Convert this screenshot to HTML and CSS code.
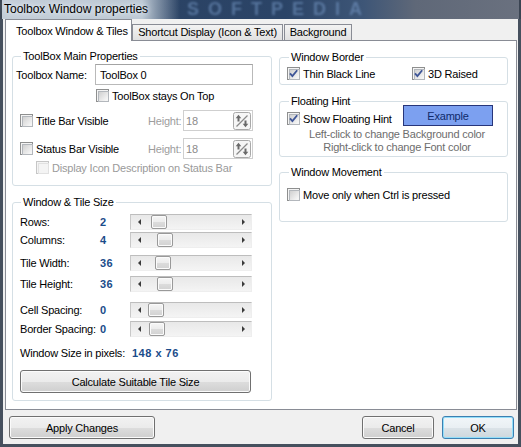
FILE: index.html
```html
<!DOCTYPE html>
<html>
<head>
<meta charset="utf-8">
<title>Toolbox Window properties</title>
<link rel="stylesheet" href="styles.css">
</head>
<body>
<div class="window">
  <div class="titlebar">
    <span class="title">Toolbox Window properties</span>
    <span class="watermark">SOFTPEDIA</span>
  </div>
  <div class="client">
    <div class="tabs">
      <div class="tab active">Toolbox Window &amp; Tiles</div>
      <div class="tab t-shortcut">Shortcut Display (Icon &amp; Text)</div>
      <div class="tab t-bg">Background</div>
    </div>
    <div class="panel">
      <div class="col col-left">
        <fieldset class="group">
          <legend>ToolBox Main Properties</legend>
          <div class="gbody gb-main">
            <div class="row row-name">
              <span class="lbl-name">Toolbox Name:</span>
              <span class="input input-name">ToolBox 0</span>
            </div>
            <div class="row row-ontop">
              <span class="check"><span class="cb"></span><span>ToolBox stays On Top</span></span>
            </div>
            <div class="row row-bar">
              <span class="check check-bar"><span class="cb"></span><span>Title Bar Visible</span></span>
              <span class="hlabel">Height:</span>
              <span class="input input-h"><span>18</span>
                <svg class="spin" width="18" height="18" viewBox="0 0 18 18"><rect x="0.5" y="0.5" width="17" height="17" rx="2" fill="#f6f6f6" stroke="#a9a9a9"/><path d="M3.5 14.5L14.5 3.5" stroke="#8a8a8a" stroke-width="1.2"/><path d="M5.5 2.8L8.3 6.2H6.5V9.5H4.5V6.2H2.7Z" fill="#6a6a6a"/><path d="M12.5 15.2L9.7 11.8H11.5V8.5H13.5V11.8H15.3Z" fill="#6a6a6a"/></svg>
              </span>
            </div>
            <div class="row row-bar row-status">
              <span class="check check-bar"><span class="cb"></span><span>Status Bar Visible</span></span>
              <span class="hlabel">Height:</span>
              <span class="input input-h"><span>18</span>
                <svg class="spin" width="18" height="18" viewBox="0 0 18 18"><rect x="0.5" y="0.5" width="17" height="17" rx="2" fill="#f6f6f6" stroke="#a9a9a9"/><path d="M3.5 14.5L14.5 3.5" stroke="#8a8a8a" stroke-width="1.2"/><path d="M5.5 2.8L8.3 6.2H6.5V9.5H4.5V6.2H2.7Z" fill="#6a6a6a"/><path d="M12.5 15.2L9.7 11.8H11.5V8.5H13.5V11.8H15.3Z" fill="#6a6a6a"/></svg>
              </span>
            </div>
            <div class="row row-desc">
              <span class="check disabled"><span class="cb"></span><span>Display Icon Description on Status Bar</span></span>
            </div>
          </div>
        </fieldset>

        <fieldset class="group g-size">
          <legend>Window &amp; Tile Size</legend>
          <div class="gbody gb-size">
            <div class="srow">
              <span>Rows:</span><span class="val">2</span>
              <div class="hscroll"><span class="sarr sarr-l"></span><span class="strack"><span class="thumb" style="margin-left:4px"></span></span><span class="sarr sarr-r"></span></div>
            </div>
            <div class="srow m2">
              <span>Columns:</span><span class="val">4</span>
              <div class="hscroll"><span class="sarr sarr-l"></span><span class="strack"><span class="thumb" style="margin-left:10px"></span></span><span class="sarr sarr-r"></span></div>
            </div>
            <div class="srow m7">
              <span>Tile Width:</span><span class="val">36</span>
              <div class="hscroll"><span class="sarr sarr-l"></span><span class="strack"><span class="thumb" style="margin-left:8px"></span></span><span class="sarr sarr-r"></span></div>
            </div>
            <div class="srow m5">
              <span>Tile Height:</span><span class="val">36</span>
              <div class="hscroll"><span class="sarr sarr-l"></span><span class="strack"><span class="thumb" style="margin-left:10px"></span></span><span class="sarr sarr-r"></span></div>
            </div>
            <div class="srow m10">
              <span>Cell Spacing:</span><span class="val">0</span>
              <div class="hscroll"><span class="sarr sarr-l"></span><span class="strack"><span class="thumb" style="margin-left:1px"></span></span><span class="sarr sarr-r"></span></div>
            </div>
            <div class="srow m3">
              <span>Border Spacing:</span><span class="val">0</span>
              <div class="hscroll"><span class="sarr sarr-l"></span><span class="strack"><span class="thumb" style="margin-left:2px"></span></span><span class="sarr sarr-r"></span></div>
            </div>
            <div class="wsrow">
              <span class="ws-label">Window Size in pixels:</span><span class="val">148 x 76</span>
            </div>
            <div class="btn btn-calc">Calculate Suitable Tile Size</div>
          </div>
        </fieldset>
      </div>

      <div class="col col-right">
        <fieldset class="group g-r">
          <legend>Window Border</legend>
          <div class="gbody gb-wb">
            <div class="wbrow">
              <span class="check"><span class="cb"><svg class="tick" width="11" height="11" viewBox="0 0 11 11"><path d="M2 5.3L4.4 8L9.2 2.2" fill="none" stroke="#3e5597" stroke-width="1.8"/></svg></span><span>Thin Black Line</span></span>
              <span class="check"><span class="cb"><svg class="tick" width="11" height="11" viewBox="0 0 11 11"><path d="M2 5.3L4.4 8L9.2 2.2" fill="none" stroke="#3e5597" stroke-width="1.8"/></svg></span><span>3D Raised</span></span>
            </div>
          </div>
        </fieldset>

        <fieldset class="group g-r g-hint">
          <legend>Floating Hint</legend>
          <div class="gbody gb-hint">
            <div class="hintrow">
              <span class="check check-hint"><span class="cb"><svg class="tick" width="11" height="11" viewBox="0 0 11 11"><path d="M2 5.3L4.4 8L9.2 2.2" fill="none" stroke="#3e5597" stroke-width="1.8"/></svg></span><span>Show Floating Hint</span></span>
              <span class="example">Example</span>
            </div>
            <div class="hint hint-first">Left-click to change Background color</div>
            <div class="hint">Right-click to change Font color</div>
          </div>
        </fieldset>

        <fieldset class="group g-r g-move">
          <legend>Window Movement</legend>
          <div class="gbody gb-move">
            <div class="row row-move">
              <span class="check"><span class="cb"></span><span>Move only when Ctrl is pressed</span></span>
            </div>
          </div>
        </fieldset>
      </div>
    </div>
    <div class="buttons">
      <div class="btn btn-apply">Apply Changes</div>
      <div class="btn btn-cancel">Cancel</div>
      <div class="btn btn-ok">OK</div>
    </div>
  </div>
</div>
</body>
</html>
```
FILE: styles.css
```css
* { box-sizing: border-box; }
html, body { margin: 0; padding: 0; }
body {
  width: 521px;
  height: 447px;
  overflow: hidden;
  font-family: "Liberation Sans", Arial, sans-serif;
  font-size: 11px;
  letter-spacing: -0.2px;
  color: #000;
  background: #f0f0f0;
}
.window {
  width: 521px;
  height: 447px;
  display: flex;
  flex-direction: column;
  background: #f0f0f0;
}
.titlebar {
  position: relative;
  height: 19px;
  flex: none;
  background:
    linear-gradient(90deg, #c3cdd8 0, #bcc8d4 140px, rgba(188,200,212,0) 178px),
    linear-gradient(90deg, #2a4161 0%, #2b4467 55%, #3e5677 70%, #5f6878 80%, #6a717f 100%);
  border-left: 2px solid #3a4452;
  border-right: 2px solid #3a4452;
}
.title {
  position: relative;
  z-index: 1;
  display: block;
  padding-left: 2px;
  line-height: 18px;
  font-size: 12px;
  letter-spacing: 0;
  color: #000;
  text-shadow: 0 0 4px #e8eef5, 0 0 8px #e8eef5;
}
.watermark {
  position: absolute;
  left: 185px;
  top: 0;
  line-height: 19px;
  font-family: "Liberation Sans", Arial, sans-serif;
  font-weight: bold;
  font-size: 18px;
  letter-spacing: 9px;
  color: rgba(120, 155, 200, 0.55);
  filter: blur(1px);
}
.client {
  flex: 1;
  display: flex;
  flex-direction: column;
  border: 3px solid #46505e;
  border-top: 0;
  padding: 0 1px 5px 2px;
}

/* tabs */
.tabs {
  height: 21px;
  display: flex;
  align-items: flex-end;
  flex: none;
}
.tab {
  height: 16px;
  border: 1px solid #898c95;
  border-bottom: 0;
  background: linear-gradient(#f3f3f3, #e1e1e1);
  line-height: 14px;
  text-align: center;
  white-space: nowrap;
}
.tab.active {
  position: relative;
  z-index: 1;
  width: 127px;
  height: 22px;
  margin-bottom: -1px;
  background: #fff;
  padding: 4px 0 0 10px;
  text-align: left;
}
.t-shortcut { width: 151px; }
.t-bg { width: 68px; margin-left: 1px; }

/* panel */
.panel {
  height: 370px;
  flex: none;
  border: 1px solid #898c95;
  background: #fff;
  display: flex;
  align-items: flex-start;
  gap: 7px;
  padding: 9px 8px 0 6px;
}
.col { display: flex; flex-direction: column; }
.col-left { width: 260px; }
.col-right { width: 229px; margin-top: 1px; }

.group {
  margin: 0;
  padding: 0;
  min-width: 0;
  border: 1px solid #d5dfe5;
  border-radius: 3px;
}
.group legend {
  margin-left: 8px;
  padding: 0 2px;
  height: 13px;
  line-height: 13px;
}
.g-r legend { margin-left: 9px; }
.g-size { margin-top: 10px; }
.g-hint { margin-top: 10px; }
.g-move { margin-top: 9px; }

.gb-main { padding: 1px 0 10px 3px; }
.gb-size { padding: 5px 0 7px 7px; }
.gb-wb { padding: 2px 0 3px 7px; }
.gb-hint { padding: 0 0 2px 7px; }
.gb-move { padding: 8px 0 19px 7px; }

.row { display: flex; align-items: center; }
.row-name { height: 21px; }
.lbl-name { width: 79px; }
.row-ontop { height: 15px; margin-top: 3px; padding-left: 80px; }
.row-bar { height: 21px; margin-top: 7px; }
.check-bar { width: 128px; margin-left: 4px; }
.hlabel { width: 35px; color: #9d9d9d; }
.row-desc { height: 15px; margin-top: 1px; padding-left: 20px; }
.row-move { height: 15px; }

.input {
  height: 21px;
  display: flex;
  align-items: center;
  background: #fff;
  border: 1px solid #b9b9b9;
  border-top-color: #a3a3a3;
}
.input-name { width: 158px; padding-left: 4px; }
.input-h {
  width: 70px;
  padding: 0 1px 0 2px;
  justify-content: space-between;
  color: #8b8b8b;
  border-color: #cfcfcf;
}
.spin { display: block; }

/* checkboxes */
.check {
  display: flex;
  align-items: center;
  gap: 3px;
  white-space: nowrap;
  height: 15px;
}
.cb {
  position: relative;
  flex: none;
  width: 13px;
  height: 13px;
  border: 1px solid #8e8f8f;
  background: #f4f4f4;
  padding: 1px;
}
.cb::before {
  content: "";
  display: block;
  width: 9px;
  height: 9px;
  border: 1px solid #b3b7bc;
  background: linear-gradient(135deg, #d0d0d0, #f5f5f5 85%);
}
.tick { position: absolute; left: 0; top: 0; }
.check.disabled { color: #9a9a9a; }
.check.disabled .cb { border-color: #c6c6c6; }
.check.disabled .cb::before { border-color: #e1e1e1; background: #f4f4f4; }

/* size rows */
.srow {
  display: grid;
  grid-template-columns: 80px 30px 122px;
  align-items: center;
  height: 16px;
}
.m2 { margin-top: 2px; }
.m3 { margin-top: 3px; }
.m5 { margin-top: 5px; }
.m7 { margin-top: 7px; }
.m10 { margin-top: 10px; }
.val {
  font-weight: bold;
  color: #1b4c8a;
  letter-spacing: 0.5px;
}
.hscroll {
  width: 122px;
  height: 16px;
  display: flex;
  align-items: center;
  border: 1px solid #eeeeee;
  border-top-color: #bdbdbd;
  border-left-color: #c8c8c8;
  background: linear-gradient(#e8e8e8, #f4f4f4);
}
.sarr {
  width: 16px;
  height: 14px;
  flex: none;
  display: flex;
  align-items: center;
  justify-content: center;
}
.sarr::before {
  content: "";
  display: block;
  border-top: 3.5px solid transparent;
  border-bottom: 3.5px solid transparent;
}
.sarr-l::before { border-right: 3px solid #3a3a3a; }
.sarr-r::before { border-left: 3px solid #3a3a3a; }
.strack { flex: 1; display: flex; align-items: center; height: 14px; }
.thumb {
  display: block;
  width: 16px;
  height: 14px;
  border: 1px solid #999;
  border-radius: 2px;
  background: linear-gradient(#f6f6f6 0%, #ececec 50%, #dcdcdc 51%, #d2d2d2 100%);
  box-shadow: inset 0 0 0 1px #fbfbfb;
}
.wsrow {
  display: flex;
  align-items: center;
  height: 15px;
  margin-top: 8px;
}
.ws-label { width: 112px; }

/* buttons */
.btn {
  height: 23px;
  display: flex;
  align-items: center;
  justify-content: center;
  border: 1px solid #707070;
  border-radius: 3px;
  background: linear-gradient(#f2f2f2 0%, #ebebeb 50%, #dddddd 51%, #cfcfcf 100%);
  box-shadow: inset 0 0 0 1px #fbfbfb;
  white-space: nowrap;
}
.btn-calc { width: 231px; margin-top: 10px; }
.buttons {
  display: flex;
  height: 23px;
  margin-top: 6px;
  padding: 0 3px 0 4px;
  flex: none;
}
.btn-apply { width: 146px; }
.btn-cancel { width: 72px; margin-left: auto; }
.btn-ok {
  width: 72px;
  margin-left: 8px;
  border-color: #3c7fb1;
  box-shadow: inset 0 0 0 1px #93def9;
  background: linear-gradient(#f1f6f9 0%, #e9eff3 50%, #dbe3e8 51%, #ced7dd 100%);
}

/* right column */
.wbrow {
  display: grid;
  grid-template-columns: 125px auto;
  align-items: center;
  height: 15px;
}
.hintrow {
  display: flex;
  height: 21px;
  margin-top: -3px;
}
.check-hint { width: 116px; margin-top: 6px; }
.example {
  width: 90px;
  height: 21px;
  display: flex;
  align-items: center;
  justify-content: center;
  background: #7ca0f0;
  border: 1px solid #27357a;
  color: #0f2a6a;
}
.hint {
  text-align: center;
  line-height: 13px;
  color: #6d6d6d;
}
.hint-first { margin-top: 2px; }
```
